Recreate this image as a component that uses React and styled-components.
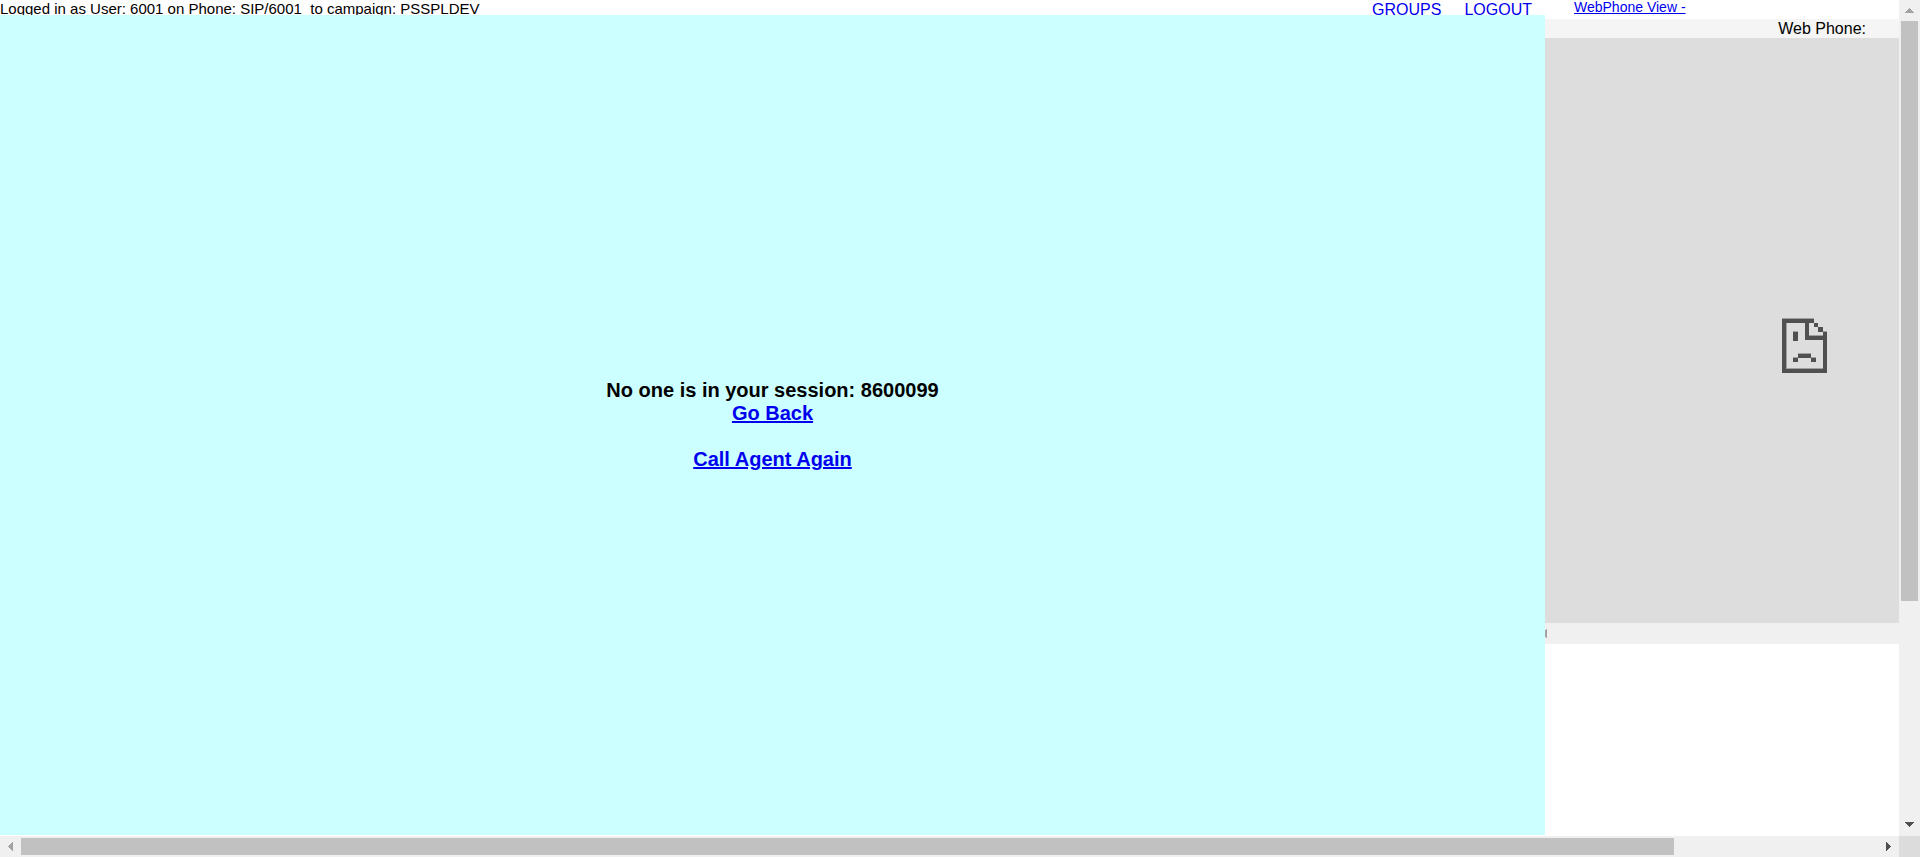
import React from "react";
import styled, { createGlobalStyle } from "styled-components";

const GlobalStyle = createGlobalStyle`
  *, *::before, *::after { box-sizing: border-box; }
  body {
    margin: 0;
    background: #fff;
    color: #000;
    font-family: "Liberation Sans", Arial, sans-serif;
    font-size: 16px;
    overflow: hidden;
  }
`;

const Window = styled.div`
  display: grid;
  grid-template-columns: minmax(0, 1fr) 21px;
  grid-template-rows: minmax(0, 1fr) 21px;
  height: 100vh;
`;

const Page = styled.div`
  display: grid;
  grid-template-columns: minmax(0, 1fr) 354px;
  min-height: 0;
  overflow: hidden;
`;

const Column = styled.div`
  display: flex;
  flex-direction: column;
  min-height: 0;
`;

const AgentBar = styled.header`
  display: flex;
  justify-content: space-between;
  flex: none;
  height: 15px;
  padding-right: 13px;
  overflow: hidden;
  white-space: pre;
`;

const Status = styled.span`
  font-size: 15px;
  line-height: 17px;
`;

const BarLinks = styled.nav`
  display: flex;
  gap: 23px;
  line-height: 20px;
`;

const Link = styled.a`
  color: #0000ee;
  text-decoration: ${(p) => (p.$plain ? "none" : "underline")};
`;

const SessionNotice = styled.main`
  display: flex;
  flex: 1;
  flex-direction: column;
  align-items: center;
  justify-content: center;
  margin-bottom: 1px;
  background: #ccffff;
  font-size: 20px;
  font-weight: bold;
  line-height: 23px;
`;

const NoticeLine = styled.p`
  margin: 0;
`;

const NoticeActions = styled.div`
  display: flex;
  flex-direction: column;
  align-items: center;
  gap: 23px;
`;

const PhoneToggle = styled.div`
  height: 19px;
  padding-left: 29px;
  font-size: 14px;
  line-height: 15px;
`;

const PhoneTitle = styled.h2`
  height: 19px;
  margin: 0;
  padding-right: 33px;
  background: #f5f5f5;
  font-size: 16px;
  font-weight: normal;
  line-height: 19px;
  text-align: right;
`;

const PhoneFrame = styled.section`
  display: flex;
  align-items: center;
  justify-content: flex-end;
  height: 585px;
  padding: 30px 72px 0 0;
  background: #dddddd;
`;

const FrameScroll = styled.div`
  display: flex;
  align-items: center;
  height: 21px;
  background: #f0f0f0;
`;

const Track = styled.div`
  display: flex;
  flex-direction: ${(p) => (p.$vertical ? "column" : "row")};
  background: #f0f0f0;
`;

const ArrowButton = styled.button`
  display: flex;
  flex: none;
  align-items: center;
  justify-content: center;
  width: 21px;
  height: 21px;
  padding: 0;
  border: 0;
  background: none;
  color: ${(p) => (p.$active ? "#505050" : "#a3a3a3")};
`;

const Rail = styled.div`
  display: flex;
  flex: 1;
  flex-direction: ${(p) => (p.$vertical ? "column" : "row")};
  padding: ${(p) => (p.$vertical ? "0 2px" : "2px 0")};
`;

const Thumb = styled.div`
  flex: 0 0 ${(p) => p.$size};
  background: #c1c1c1;
`;

const Corner = styled.div`
  background: #dcdcdc;
`;

const arrows = {
  up: "M4 1h1v1h1v1h1v1h1v1h1v1H0V5h1V4h1V3h1V2h1z",
  down: "M0 0h9v1H8v1H7v1H6v1H5v1H4V4H3V3H2V2H1V1H0z",
  left: "M5 0v9H4V8H3V7H2V6H1V5H0V4h1V3h1V2h1V1h1V0z",
  right: "M0 0h1v1h1v1h1v1h1v1h1v1H4v1H3v1H2v1H1v1H0z",
};

function Arrow({ direction, label, active }) {
  const vertical = direction === "up" || direction === "down";
  const [w, h] = vertical ? [9, 7] : [5, 9];
  return (
    <ArrowButton type="button" aria-label={label} $active={active}>
      <svg width={w} height={h} viewBox={`0 0 ${w} ${h}`} shapeRendering="crispEdges">
        <path d={arrows[direction]} fill="currentColor" />
      </svg>
    </ArrowButton>
  );
}

function ScrollBar({ vertical, size }) {
  return (
    <Track $vertical={vertical}>
      <Arrow direction={vertical ? "up" : "left"} label={vertical ? "Scroll up" : "Scroll left"} />
      <Rail $vertical={vertical}>
        <Thumb $size={size} />
      </Rail>
      <Arrow active direction={vertical ? "down" : "right"} label={vertical ? "Scroll down" : "Scroll right"} />
    </Track>
  );
}

function SadPage() {
  return (
    <svg width="45" height="55" viewBox="0 0 45 55" role="img" aria-label="Page failed to load">
      <path fill="#a0a0a0" d="M0 0h32v1H0zM4 4h19v1H4zM4 50h37v1H4zM27 17h14v1H27zM11 13h5v1h-5zM16 35h13v1H16zM11 39h5v1h-5zM29 39h5v1h-5zM4 4h1v46H4zM41 13h4v1h-4z" />
      <path
        fill="#505050"
        fillRule="evenodd"
        d="M0 1h32v4h-5v13h14v-4h4v41H0zM4 5v46h37V22H23V5z"
      />
      <path fill="#505050" d="M32 5h4v4h-4zM36 9h5v5h-5zM11 14h5v9h-5zM16 36h13v4H16zM11 40h5v4h-5zM29 40h5v4h-5z" />
    </svg>
  );
}

export default function App() {
  return (
    <>
      <GlobalStyle />
      <Window>
        <Page>
          <Column>
            <AgentBar>
              <Status>{"Logged in as User: 6001 on Phone: SIP/6001\u00a0 to campaign: PSSPLDEV"}</Status>
              <BarLinks>
                <Link $plain href="#groups">GROUPS</Link>
                <Link $plain href="#logout">LOGOUT</Link>
              </BarLinks>
            </AgentBar>
            <SessionNotice>
              <NoticeLine>No one is in your session: 8600099</NoticeLine>
              <NoticeActions>
                <Link href="#back">Go Back</Link>
                <Link href="#call">Call Agent Again</Link>
              </NoticeActions>
            </SessionNotice>
          </Column>
          <Column>
            <PhoneToggle>
              <Link href="#webphone">WebPhone View -</Link>
            </PhoneToggle>
            <PhoneTitle>Web Phone:</PhoneTitle>
            <PhoneFrame>
              <SadPage />
            </PhoneFrame>
            <FrameScroll>
              <svg width="2" height="9" viewBox="0 0 2 9" shapeRendering="crispEdges" aria-hidden="true">
                <path fill="#a3a3a3" d="M0 1h1V0h1v9H1V8H0z" />
              </svg>
            </FrameScroll>
          </Column>
        </Page>
        <ScrollBar vertical size="73%" />
        <ScrollBar size="89%" />
        <Corner />
      </Window>
    </>
  );
}
